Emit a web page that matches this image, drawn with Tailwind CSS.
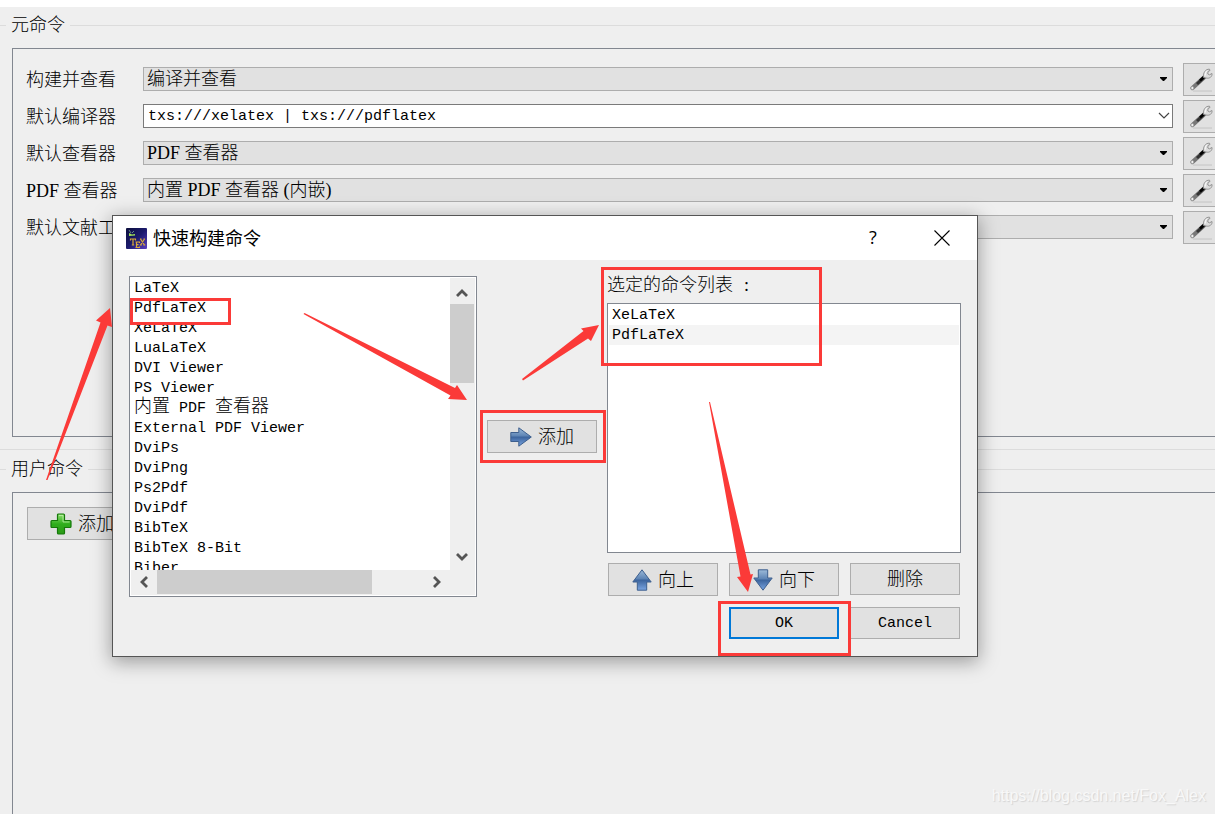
<!DOCTYPE html>
<html lang="zh-CN">
<head>
  <meta charset="UTF-8" />
  <meta name="viewport" content="width=device-width, initial-scale=1.0" />
  <title>快速构建命令</title>
  <script src="https://cdn.jsdelivr.net/npm/@tailwindcss/browser@4"></script>
</head>
<body class="bg-[#efefef] text-black font-['Liberation_Serif','Noto_Sans_CJK_SC',serif] text-[18px] leading-6 font-light">

  <!-- shared icons -->
  <svg class="absolute w-0 h-0" aria-hidden="true">
    <defs>
      <linearGradient id="blue" x1="0" y1="0" x2="0" y2="1">
        <stop offset="0" stop-color="#9dbbd9" />
        <stop offset="0.45" stop-color="#5c83b4" />
        <stop offset="0.5" stop-color="#3b639c" />
        <stop offset="1" stop-color="#7ba6e2" />
      </linearGradient>
      <linearGradient id="green" x1="0" y1="0" x2="0" y2="1">
        <stop offset="0" stop-color="#8fe070" />
        <stop offset="0.5" stop-color="#2fae1c" />
        <stop offset="1" stop-color="#2c9a18" />
      </linearGradient>
      <linearGradient id="night" x1="0" y1="0" x2="1" y2="1">
        <stop offset="0" stop-color="#0c0f3c" />
        <stop offset="0.5" stop-color="#1b1a6c" />
        <stop offset="1" stop-color="#5a3fc0" />
      </linearGradient>
      <symbol id="wrench" viewBox="0 0 24 24">
        <path d="M4 23h19" stroke="#c4c4c4" stroke-width="1" />
        <path d="M3.500 20L15 9.500" stroke="#777" stroke-width="4.400" stroke-linecap="round" />
        <path d="M8 16l7.500-7" stroke="#333" stroke-width="3" />
        <path d="M11 12.500l4.500-4" stroke="#000" stroke-width="2.500" />
        <path d="M14.500 9.500C14 4.500 16.500 1 20.500 1.200L21 2.500L19 3.500L18.800 6L20.500 6.800L23 5.500C23.500 8.500 20.500 11 17 10Z" fill="#dcdcdc" stroke="#8a8a8a" stroke-width="0.900" />
        <path d="M16.200 7.500C16 5 17 3.300 18.300 2.600" fill="none" stroke="#fff" />
        <circle cx="3.300" cy="20" r="1.500" fill="#f4f4f4" stroke="#999" stroke-width="0.800" />
      </symbol>
    </defs>
  </svg>

  <main class="relative min-h-screen overflow-hidden flex flex-col">
    <div class="h-[7px] bg-white"></div>

    <!-- Meta commands -->
    <fieldset class="min-w-0 border-y border-[#dcdcdc] pb-3">
      <legend class="ml-[6px] px-[5px] h-9 leading-9">元命令</legend>
      <div class="mt-[5px] ml-3 min-h-[389px] border border-r-0 border-[#828790] pt-[14px] pl-[13px] flex flex-col gap-1">
        <div class="flex items-center">
          <label for="build" class="w-[117px] shrink-0">构建并查看</label>
          <div class="relative flex-1 mb-px">
            <select id="build" class="block w-full h-6 appearance-none bg-[#e1e1e1] border border-[#adadad] pl-[3px] leading-[22px]"><option>编译并查看</option></select>
            <svg class="absolute right-[6px] top-[10px] w-[7px] h-[4px] pointer-events-none" viewBox="0 0 7 4"><path d="M0 0h7v1L4 4H3L0 1z" /></svg>
          </div>
          <button aria-label="配置" class="ml-[10px] w-8 h-[33px] bg-[#e1e1e1] border border-r-0 border-[#adadad] pl-[5px]"><svg class="w-6 h-6"><use href="#wrench" /></svg></button>
        </div>
        <div class="flex items-center">
          <label for="compiler" class="w-[117px] shrink-0">默认编译器</label>
          <div class="relative flex-1 mb-px">
            <input id="compiler" type="text" value="txs:///xelatex | txs:///pdflatex" class="block w-full h-6 bg-white border border-[#7a7a7a] pl-[4px] pt-px font-['Liberation_Mono',monospace] text-[15px] font-normal" />
            <button aria-label="展开" class="absolute right-[3px] top-[7px] w-3 h-[10px] flex"><svg class="w-3 h-[10px]" viewBox="0 0 12 10" fill="none" stroke="#444" stroke-width="1.200"><path d="M1 2l5 5 5-5" /></svg></button>
          </div>
          <button aria-label="配置" class="ml-[10px] w-8 h-[33px] bg-[#e1e1e1] border border-r-0 border-[#adadad] pl-[5px]"><svg class="w-6 h-6"><use href="#wrench" /></svg></button>
        </div>
        <div class="flex items-center">
          <label for="viewer" class="w-[117px] shrink-0">默认查看器</label>
          <div class="relative flex-1 mb-px">
            <select id="viewer" class="block w-full h-6 appearance-none bg-[#e1e1e1] border border-[#adadad] pl-[3px] leading-[22px]"><option>PDF 查看器</option></select>
            <svg class="absolute right-[6px] top-[10px] w-[7px] h-[4px] pointer-events-none" viewBox="0 0 7 4"><path d="M0 0h7v1L4 4H3L0 1z" /></svg>
          </div>
          <button aria-label="配置" class="ml-[10px] w-8 h-[33px] bg-[#e1e1e1] border border-r-0 border-[#adadad] pl-[5px]"><svg class="w-6 h-6"><use href="#wrench" /></svg></button>
        </div>
        <div class="flex items-center">
          <label for="pdf" class="w-[117px] shrink-0">PDF 查看器</label>
          <div class="relative flex-1 mb-px">
            <select id="pdf" class="block w-full h-6 appearance-none bg-[#e1e1e1] border border-[#adadad] pl-[3px] leading-[22px]"><option>内置 PDF 查看器 (内嵌)</option></select>
            <svg class="absolute right-[6px] top-[10px] w-[7px] h-[4px] pointer-events-none" viewBox="0 0 7 4"><path d="M0 0h7v1L4 4H3L0 1z" /></svg>
          </div>
          <button aria-label="配置" class="ml-[10px] w-8 h-[33px] bg-[#e1e1e1] border border-r-0 border-[#adadad] pl-[5px]"><svg class="w-6 h-6"><use href="#wrench" /></svg></button>
        </div>
        <div class="flex items-center">
          <label for="bib" class="w-[117px] shrink-0 whitespace-nowrap">默认文献工具</label>
          <div class="relative flex-1 mb-px">
            <select id="bib" class="block w-full h-6 appearance-none bg-[#e1e1e1] border border-[#adadad] pl-[3px] leading-[22px]"><option>BibTeX</option></select>
            <svg class="absolute right-[6px] top-[10px] w-[7px] h-[4px] pointer-events-none" viewBox="0 0 7 4"><path d="M0 0h7v1L4 4H3L0 1z" /></svg>
          </div>
          <button aria-label="配置" class="ml-[10px] w-8 h-[33px] bg-[#e1e1e1] border border-r-0 border-[#adadad] pl-[5px]"><svg class="w-6 h-6"><use href="#wrench" /></svg></button>
        </div>
      </div>
    </fieldset>

    <!-- User commands -->
    <fieldset class="min-w-0 mt-px border-t border-[#dcdcdc]">
      <legend class="ml-[6px] px-[5px] h-9 leading-9">用户命令</legend>
      <div class="mt-[5px] ml-3 min-h-[322px] border border-r-0 border-b-0 border-[#828790] p-[14px]">
        <button class="w-[110px] h-[33px] bg-[#e1e1e1] border border-[#adadad] flex items-center justify-center gap-[6px]">
          <svg class="w-[22px] h-[22px]" viewBox="0 0 22 22"><path d="M8.500 1h5q1 0 1 1v5.500H20q1 0 1 1v5q0 1-1 1h-5.500V20q0 1-1 1h-5q-1 0-1-1v-5.500H2q-1 0-1-1v-5q0-1 1-1h5.500V2q0-1 1-1z" fill="url(#green)" stroke="#15780a" stroke-width="1.200" /><path d="M9 2.500h4V9h6.500" fill="none" stroke="#c6f5b4" stroke-opacity="0.700" /></svg>
          添加
        </button>
      </div>
    </fieldset>

    <!-- Quick build dialog -->
    <section role="dialog" aria-labelledby="dialogTitle" class="absolute left-[112px] top-[215px] w-[866px] bg-[#efefef] border border-[#555] shadow-[0_4px_18px_1px_rgba(0,0,0,0.35)]">
      <header class="h-11 bg-white flex items-center pl-[13px] pr-[26px] font-['Noto_Sans_CJK_SC',sans-serif] font-normal">
        <svg class="w-[21px] h-[21px]" viewBox="0 0 21 21" aria-label="TeX">
          <rect width="21" height="21" rx="1" fill="url(#night)" />
          <path d="M3 5l3 1.500 3-.5 0 1.500-6 .5z" fill="#9fe05a" />
          <path d="M3 2l2 3M8 3l-2 2" stroke="#8ab8a0" stroke-width="0.700" />
          <g fill="none" stroke="#d9a93a" stroke-width="1.200"><path d="M4.500 12.500V11h5v1.500M7 11v6M5.800 17h2.400" /><path d="M9.500 14h4v1M10.500 14v5.500M9.500 19.500h4v-1M10.500 16.700h2" /><path d="M14.500 11l4 6M18.500 11l-4 6M13.800 17h2M17.300 17h2M14 11h1.500M17.500 11H19" /></g>
        </svg>
        <h1 id="dialogTitle" class="ml-[6px] flex-1 leading-[22px] pb-[2px]">快速构建命令</h1>
        <button aria-label="帮助" class="w-5 pb-[2px] font-['Open_Sans',sans-serif]">?</button>
        <button aria-label="关闭" class="ml-[50px] w-[18px] h-[18px] flex items-center justify-center"><svg class="w-4 h-4" viewBox="0 0 16 16" stroke="#000" stroke-width="1.100"><path d="M.5.500l15 15M15.500.500l-15 15" /></svg></button>
      </header>

      <div class="flex gap-[10px] px-4 pt-4 pb-[17px]">
        <div class="w-[348px] h-[321px] bg-white border border-[#828790] p-px grid grid-cols-[1fr_25px] grid-rows-[1fr_25px]">
          <ul class="overflow-hidden min-h-0 pl-[3px] font-['Liberation_Mono','Noto_Sans_CJK_SC',monospace] text-[15px] leading-[22px] font-normal whitespace-nowrap">
            <li class="h-5">LaTeX</li>
            <li class="h-5">PdfLaTeX</li>
            <li class="h-5">XeLaTeX</li>
            <li class="h-5">LuaLaTeX</li>
            <li class="h-5">DVI Viewer</li>
            <li class="h-5">PS Viewer</li>
            <li class="h-5"><span class="text-[18px] leading-[0px] font-light">内置</span> PDF <span class="text-[18px] leading-[0px] font-light">查看器</span></li>
            <li class="h-5">External PDF Viewer</li>
            <li class="h-5">DviPs</li>
            <li class="h-5">DviPng</li>
            <li class="h-5">Ps2Pdf</li>
            <li class="h-5">DviPdf</li>
            <li class="h-5">BibTeX</li>
            <li class="h-5">BibTeX 8-Bit</li>
            <li class="h-5">Biber</li>
          </ul>
          <div class="bg-[#efefef] flex flex-col">
            <button aria-label="向上滚动" class="w-6 h-[26px] flex items-center justify-center pt-1"><svg class="w-3 h-2" viewBox="0 0 12 8" fill="none" stroke="#555" stroke-width="2.800"><path d="M1 7l5-5 5 5" /></svg></button>
            <div class="h-[79px] w-6 bg-[#cdcdcd]"></div>
            <button aria-label="向下滚动" class="w-6 h-[26px] mt-auto flex items-center justify-center"><svg class="w-3 h-2" viewBox="0 0 12 8" fill="none" stroke="#555" stroke-width="2.800"><path d="M1 1l5 5 5-5" /></svg></button>
          </div>
          <div class="bg-[#efefef] flex">
            <button aria-label="向左滚动" class="w-[26px] h-6 flex items-center justify-center"><svg class="w-2 h-3" viewBox="0 0 8 12" fill="none" stroke="#555" stroke-width="2.800"><path d="M7 1L2 6l5 5" /></svg></button>
            <div class="w-[215px] h-6 bg-[#cdcdcd]"></div>
            <button aria-label="向右滚动" class="w-[26px] h-6 ml-auto flex items-center justify-center"><svg class="w-2 h-3" viewBox="0 0 8 12" fill="none" stroke="#555" stroke-width="2.800"><path d="M1 1l5 5-5 5" /></svg></button>
          </div>
          <div class="bg-[#efefef]"></div>
        </div>

        <div class="w-[110px] flex flex-col items-center pt-36">
          <button class="w-[110px] h-[33px] bg-[#e1e1e1] border border-[#adadad] flex items-center justify-center gap-[6px]">
            <svg class="w-[22px] h-[20px]" viewBox="0 0 22 20"><path d="M.8 5.500h8V.8L21.300 10 8.800 19.200v-4.700h-8z" fill="url(#blue)" stroke="#3d5f8e" /></svg>
            添加
          </button>
        </div>

        <div class="flex-1">
          <h2 class="h-[27px] leading-[18px]">选定的命令列表<span class="ml-[11px]">:</span></h2>
          <ul class="h-[250px] bg-white border border-[#828790] p-px font-['Liberation_Mono',monospace] text-[15px] leading-[22px] font-normal">
            <li class="h-5 pl-[3px]">XeLaTeX</li>
            <li class="h-5 pl-[3px] bg-[#f4f4f4]">PdfLaTeX</li>
          </ul>
          <div class="mt-[10px] px-px grid grid-cols-3 gap-[11px]">
            <button class="h-[33px] bg-[#e1e1e1] border border-[#adadad] flex items-center justify-center gap-[6px]">
              <svg class="w-[20px] h-[22px]" viewBox="0 0 20 22"><path d="M10 .8L19.200 13H14.700v8.200H5.300V13H.8z" fill="url(#blue)" stroke="#3d5f8e" /></svg>
              向上
            </button>
            <button class="h-[33px] bg-[#e1e1e1] border border-[#adadad] flex items-center justify-center gap-[6px]">
              <svg class="w-[20px] h-[22px]" viewBox="0 0 20 22"><path d="M10 21.200L.8 9h4.500V.8h9.400V9h4.500z" fill="url(#blue)" stroke="#3d5f8e" /></svg>
              向下
            </button>
            <button class="h-8 bg-[#e1e1e1] border border-[#adadad]">删除</button>
            <button class="col-start-2 h-8 bg-[#e1e1e1] border-2 border-[#0078d7] pt-[2px] font-['Liberation_Mono',monospace] text-[15px] font-normal">OK</button>
            <button class="h-8 bg-[#e1e1e1] border border-[#adadad] pt-[2px] font-['Liberation_Mono',monospace] text-[15px] font-normal">Cancel</button>
          </div>
        </div>
      </div>
    </section>

    <!-- Step markers -->
    <svg class="absolute left-0 top-0 w-[1215px] h-[814px] pointer-events-none" viewBox="0 0 1215 814">
      <g fill="none" stroke="#fb3a38" stroke-width="3">
        <rect x="131.500" y="299.500" width="98" height="24" />
        <rect x="602.500" y="268.500" width="218" height="96" />
        <rect x="481.500" y="411.500" width="123" height="50" />
        <rect x="719.500" y="602.500" width="130" height="52" />
      </g>
      <g fill="#fb3a38">
        <path d="M46 480L47.500 480L107.500 325.500L112 327L110 308L96 320.500L100.500 322.500Z" />
        <path d="M303.500 314L304.500 313L455 388L457 385L467 400L448 399L450.500 395.500Z" />
        <path d="M522 379L523 380.500L588 338.500L591 341L599 325L581 328.500L583.500 331Z" />
        <path d="M709 402L710 402L750.500 574.500L753 574L748 592L737 577L740.500 576.500Z" />
      </g>
    </svg>

    <p class="absolute right-[9px] bottom-[6px] leading-6 font-['Liberation_Sans',sans-serif] text-[16px] font-normal text-[#f8f8f8] [text-shadow:1px_1px_1px_#d4d4d4]">https://blog.csdn.net/Fox_Alex</p>
  </main>
</body>
</html>
